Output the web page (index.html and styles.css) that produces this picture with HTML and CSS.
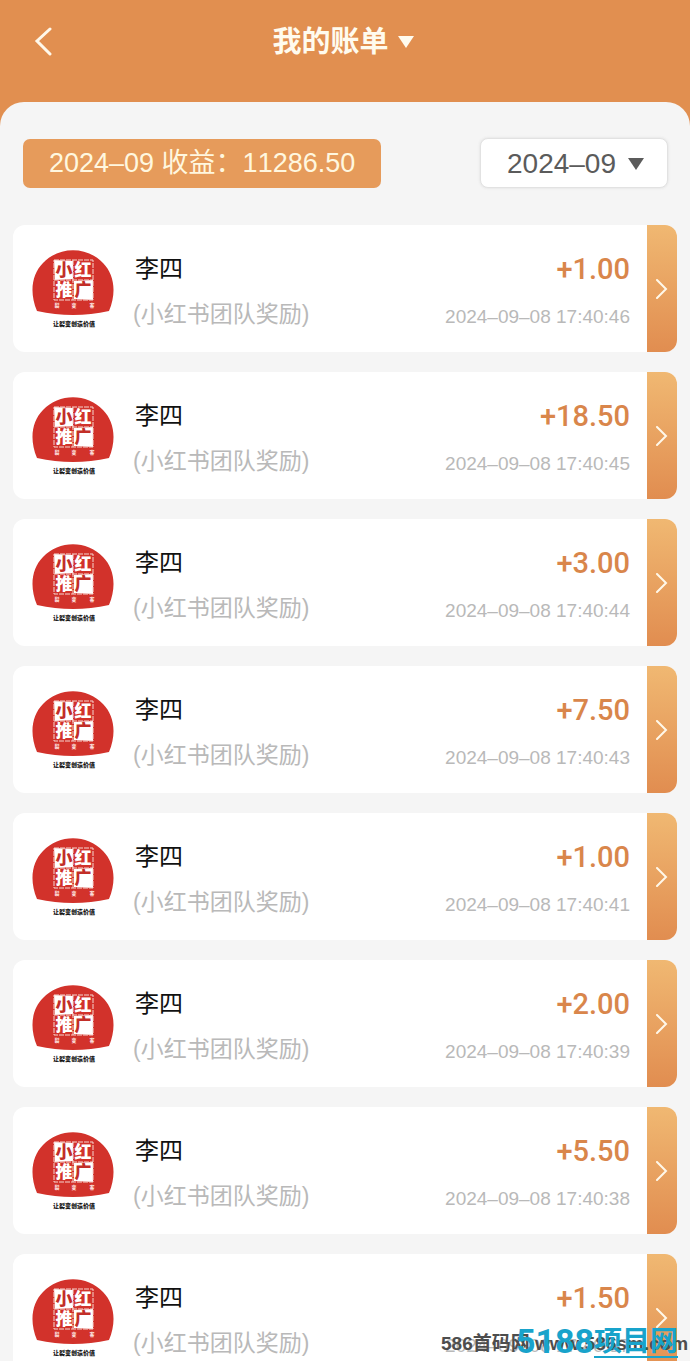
FILE: index.html
```
<!DOCTYPE html>
<html lang="zh-CN">
<head>
<meta charset="UTF-8">
<meta name="viewport" content="width=device-width, initial-scale=1">

<title>我的账单</title>

<link rel="stylesheet" href="styles.css">
</head>

<body>

<header class="topbar">
	<a href="#" class="back" aria-label="返回">
		<svg width="18" height="30" viewBox="0 0 18 30"><path d="M16 2 L3 14 L16 27" /></svg>
	</a>
	<h1><button type="button" class="title">我的账单 <svg width="18" height="12" viewBox="0 0 18 12"><path d="M1 0 H17 L9 12 Z" /></svg></button></h1>
</header>

<main class="sheet">
	<div class="filter">
		<p class="total">2024–09 收益：11286.50</p>
		<div class="month">
			<select aria-label="月份">
				<option>2024–09</option>
			</select>
			<svg width="18" height="12" viewBox="0 0 18 12"><path d="M1 0 H17 L9 12 Z" /></svg>
		</div>
	</div>

	<ul class="list" id="list"></ul>
</main>

<div class="mark">
	<span class="mark-site">586首码网 www.586sm.com</span>
	<span class="mark-name"><span class="mark-num">5188</span><span class="mark-line">项目网</span></span>
</div>

<template id="row">
	<li class="card">
		<svg class="logo" width="82" height="82" viewBox="0 0 82 82">
			<path class="red" d="M5 61 C-3 42 0 24 11 13 C27 -4 55 -4 71 13 C82 24 85 42 77 61 Q41 69 5 61 Z" />
			<path class="white" d="M22 10 L41 11 L41 29 L23 30 Z M42 31 L61 30 L61 50 L42 49 Z" />
			<path class="frame" d="M22 10 H61 V50 H22 Z M41 10 V50 M22 30 H61" />
			<text class="seal on-white" x="32" y="26">小</text>
			<text class="seal" x="51" y="26">红</text>
			<text class="seal" x="32" y="46">推</text>
			<text class="seal on-white" x="51" y="46">广</text>
			<text class="tiny" x="25" y="57">裂</text>
			<text class="tiny" x="42" y="57">变</text>
			<text class="tiny" x="60" y="57">客</text>
			<text class="slogan" x="42" y="76">让裂变创造价值</text>
		</svg>
		<div class="who">
			<p class="name">李四</p>
			<p class="kind">(小红书团队奖励)</p>
		</div>
		<div class="sum">
			<p class="amount"></p>
			<time class="time"></time>
		</div>
		<a href="#" class="more" aria-label="详情">
			<svg width="12" height="20" viewBox="0 0 12 20"><path d="M1 1 L10 10 L1 19" /></svg>
		</a>
	</li>
</template>

<script src="bill.js"></script>

</body>
</html>
```

FILE: styles.css
```
* {
	box-sizing: border-box;
}

body {
	display: flex;
	flex-direction: column;
	height: 100vh;
	margin: 0;
	overflow: hidden;
	background-color: #e18f50;
	font-family: "Liberation Sans", "Noto Sans CJK SC", sans-serif;
	font-kerning: none;
}

h1, p, ul {
	margin: 0;
	padding: 0;
}

/* header */

.topbar {
	display: grid;
	grid-template-columns: 60px 1fr 60px;
	align-items: center;
	height: 102px;
	padding-bottom: 18px;
	flex-shrink: 0;
}

.back {
	padding-left: 34px;
}

svg {
	display: block;
}

.back path, .more path {
	fill: none;
	stroke: #fff8ea;
	stroke-width: 3;
	stroke-linecap: round;
}

.more path {
	stroke-width: 2;
}

h1 {
	display: flex;
	justify-content: center;
}

.title {
	display: flex;
	align-items: center;
	gap: 8px;
	padding: 0 3px 0 0;
	border: 0;
	background: none;
	color: #fffbee;
	font-family: inherit;
	font-size: 29px;
	font-weight: bold;
	line-height: 40px;
}

.title path {
	fill: #fffbee;
}

/* sheet */

.sheet {
	flex: 1;
	min-height: 0;
	padding: 36px 13px 0;
	overflow: hidden;
	border-radius: 24px 24px 0 0;
	background-color: #f5f5f5;
}

.filter {
	display: flex;
	justify-content: space-between;
	align-items: center;
	padding: 0 9px 0 10px;
	margin-bottom: 37px;
}

.total {
	padding: 0 26px;
	border-radius: 7px;
	background-color: #e69b5b;
	color: #fff7df;
	font-size: 27px;
	line-height: 49px;
}

.month {
	position: relative;
	width: 188px;
}

.month select {
	width: 100%;
	height: 50px;
	padding: 0 26px;
	border: 1px solid #e2e2e2;
	border-radius: 8px;
	background-color: #fff;
	box-shadow: 0 0 3px #ddd;
	color: #5b5b5b;
	font-family: inherit;
	font-size: 28px;
	appearance: none;
}

.month svg {
	position: absolute;
	top: 20px;
	right: 23px;
	pointer-events: none;
}

.month path {
	fill: #5b5b5b;
}

/* rows */

.list {
	display: grid;
	gap: 20px;
	list-style: none;
}

.card {
	display: flex;
	height: 127px;
	overflow: hidden;
	border-radius: 12px;
	background-color: #fff;
}

.logo {
	flex-shrink: 0;
	margin: 25px 19px 0;
}

.who {
	flex: 1;
	padding-top: 25px;
}

.name {
	padding-left: 2px;
	color: #111;
	font-size: 24px;
	line-height: 38px;
}

.kind {
	margin-top: 7px;
	color: #b9b9b9;
	font-size: 23px;
	line-height: 38px;
}

.sum {
	padding: 24px 17px 0 0;
	text-align: right;
}

.amount {
	color: #d9864b;
	font-family: Roboto, sans-serif;
	font-size: 29px;
	font-weight: 500;
	line-height: 40px;
}

.time {
	display: block;
	margin-top: 12px;
	color: #b9b9b9;
	font-size: 19px;
	line-height: 32px;
}

.more {
	display: flex;
	align-items: center;
	justify-content: center;
	width: 30px;
	background: linear-gradient(#f0b872, #e18d50);
}

/* logo */

.red {
	fill: #d2322b;
}

.white {
	fill: #fff;
}

.frame {
	fill: none;
	stroke: #f6d5d0;
	stroke-width: 1;
	stroke-dasharray: 5 1;
}

.logo text {
	text-anchor: middle;
	font-family: "Noto Sans CJK SC", sans-serif;
	font-weight: 900;
}

.logo .seal {
	fill: #fff;
	font-size: 17px;
}

.logo .on-white {
	fill: #c22e28;
}

.logo .tiny {
	fill: #fbdcd8;
	font-size: 5px;
}

.logo .slogan {
	fill: #111;
	font-size: 6px;
}

/* site mark over the page */

.mark {
	position: absolute;
	right: 6px;
	bottom: 0;
	width: 243px;
	height: 42px;
	font-weight: bold;
	white-space: nowrap;
}

.mark-site {
	position: absolute;
	top: 12px;
	left: 0;
	color: #4d4d4d;
	font-size: 19px;
	line-height: 26px;
}

.mark-name {
	display: flex;
	align-items: flex-end;
	position: absolute;
	right: 6px;
	bottom: 3px;
	color: #18a3cb;
	font-size: 28px;
	line-height: 28px;
}

.mark-num {
	font-family: "Liberation Sans Narrow", Roboto, sans-serif;
	font-size: 34px;
	line-height: 34px;
}

.mark-line {
	border-bottom: 2px solid #18a3cb;
}
```

FILE: bill.js
```
let bills = [
	["+1.00", "2024–09–08 17:40:46"],
	["+18.50", "2024–09–08 17:40:45"],
	["+3.00", "2024–09–08 17:40:44"],
	["+7.50", "2024–09–08 17:40:43"],
	["+1.00", "2024–09–08 17:40:41"],
	["+2.00", "2024–09–08 17:40:39"],
	["+5.50", "2024–09–08 17:40:38"],
	["+1.50", "2024–09–08 17:40:37"]
];

let list = document.getElementById("list");
let row = document.getElementById("row");

for(let bill of bills) {
	let item = row.content.cloneNode(true);
	item.querySelector(".amount").textContent = bill[0];
	item.querySelector(".time").textContent = bill[1];
	list.appendChild(item);
}
```
